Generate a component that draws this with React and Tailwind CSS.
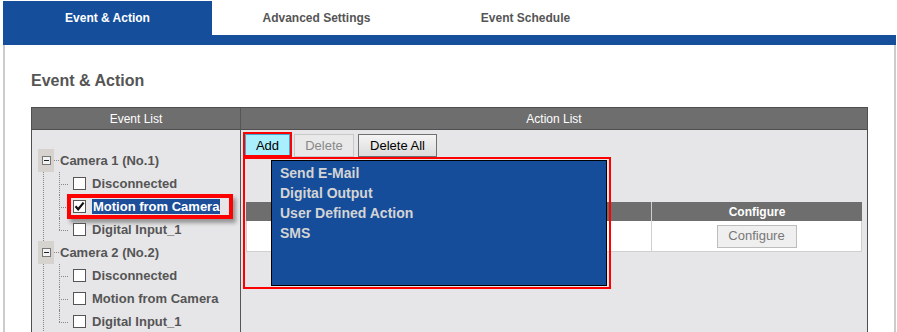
import React from "react";

const tabs = ["Event & Action", "Advanced Settings", "Event Schedule"];
const actions = ["Send E-Mail", "Digital Output", "User Defined Action", "SMS"];

const cameras = [
  { name: "Camera 1 (No.1)", items: ["Disconnected", "Motion from Camera", "Digital Input_1"], selected: 1 },
  { name: "Camera 2 (No.2)", items: ["Disconnected", "Motion from Camera", "Digital Input_1"], selected: -1 },
];

function Checkbox({ checked }) {
  return (
    <div className="w-[13px] h-[13px] border border-[#555] bg-white flex items-center justify-center shrink-0">
      {checked && (
        <svg width="11" height="11" viewBox="0 0 11 11">
          <path d="M1.5 5.2 L4.2 8.2 L9.6 1.6" fill="none" stroke="#111" strokeWidth="2.2" />
        </svg>
      )}
    </div>
  );
}

function CameraGroup({ cam }) {
  return (
    <div>
      <div className="flex items-center h-[23px]">
        <div className="w-[16px] h-[23px] bg-[#d6d3ce] flex items-center justify-center">
          <div className="w-[9px] h-[9px] border border-[#777] bg-[#f2f2f2] flex items-center justify-center">
            <div className="w-[5px] h-px bg-[#222]" />
          </div>
        </div>
        <div className="w-[5px] border-t border-dotted border-[#888]" />
        <span className="ml-px text-[13px] font-bold text-[#555]">{cam.name}</span>
      </div>
      {/* vertical line of the tree */}
      <div className="ml-[5px] border-l border-dotted border-[#888] pl-[15px]">
        {cam.items.map((item, i) => {
          const last = i === cam.items.length - 1;
          const sel = i === cam.selected;
          return (
            <div key={i} className="relative flex items-center h-[23px] pl-[14px]">
              <span className={`absolute left-0 top-0 border-l border-dotted border-[#888] ${last ? "h-1/2" : "h-full"}`} />
              <span className="absolute left-0 top-1/2 w-[9px] border-t border-dotted border-[#888]" />
              <Checkbox checked={sel} />
              {sel ? (
                <span className="ml-[6px] text-[13px] font-bold text-white bg-[#1c4e9a] leading-[15px] px-px">{item}</span>
              ) : (
                <span className="ml-[6px] text-[13px] font-bold text-[#555]">{item}</span>
              )}
              {sel && (
                <div className="absolute left-[8px] -top-px w-[166px] h-[25px] border-4 border-[#f00] shadow-[3px_4px_4px_rgba(0,0,0,0.35)]" />
              )}
            </div>
          );
        })}
      </div>
    </div>
  );
}

export default function App() {
  return (
    <div className="w-[897px] h-[332px] overflow-hidden bg-white font-['Liberation_Sans',Arial,sans-serif]">
      {/* Tabs */}
      <div className="pt-px pl-[3px] flex">
        {tabs.map((t, i) => (
          <div
            key={t}
            className={`w-[209px] h-[34px] flex items-center justify-center text-[12px] font-bold ${
              i === 0 ? "bg-[#154f9c] text-white" : "text-[#555]"
            }`}
          >
            {t}
          </div>
        ))}
      </div>
      <div className="ml-[3px] mr-px h-[10px] bg-[#154f9c]" />

      {/* Panel */}
      <div className="ml-[3px] mr-px h-[287px] border-l-2 border-r-2 border-[#cccccc]">
        <h1 className="pt-[26px] pl-[26px] text-[16px] leading-[20px] font-bold text-[#555]">Event & Action</h1>

        <div className="mt-[16px] ml-[26px] w-[837px] border-l border-r border-t border-[#4f4f4f] flex">
          {/* Event list */}
          <div className="w-[209px] border-r border-[#555]">
            <div className="h-[22px] bg-[#6e6e6e] border-b border-[#4f4f4f] flex items-center justify-center text-[12px] text-white">
              Event List
            </div>
            <div className="h-[220px] bg-[#e6e6e8] pt-[19px] pl-[6px]">
              {cameras.map((c) => (
                <CameraGroup key={c.name} cam={c} />
              ))}
            </div>
          </div>

          {/* Action list */}
          <div className="flex-1">
            <div className="h-[22px] bg-[#6e6e6e] border-b border-[#4f4f4f] flex items-center justify-center text-[12px] text-white">
              Action List
            </div>
            <div className="relative h-[220px] bg-[#e6e6e8] pt-[4px] pl-[4px]">
              <div className="flex gap-[4px]">
                <button className="w-[45px] h-[23px] bg-[#aaeffd] border border-[#3fa9d6] text-[13px] text-black">Add</button>
                <button className="w-[60px] h-[23px] bg-[#e9e9e9] border border-[#c8c8c8] text-[13px] text-[#888]">Delete</button>
                <button className="w-[79px] h-[23px] bg-gradient-to-b from-[#f4f4f4] to-[#dcdcdc] border border-[#707070] text-[13px] text-black">
                  Delete All
                </button>
              </div>

              <div className="mt-[45px] ml-px w-[616px]">
                <div className="flex h-[19px] bg-[#6e6e6e]">
                  <div className="w-[406px] border-r border-[#cfcfcf]" />
                  <div className="flex-1 flex items-center justify-center text-[12px] font-bold text-white">Configure</div>
                </div>
                <div className="flex h-[31px] bg-white border-l border-r border-b border-[#d0d0d0]">
                  <div className="w-[405px] border-r border-[#d0d0d0]" />
                  <div className="flex-1 flex items-center justify-center">
                    <button className="w-[80px] h-[23px] bg-[#efefef] border border-[#bdbdbd] text-[13px] text-[#777]">Configure</button>
                  </div>
                </div>
              </div>

              {/* Add menu */}
              <div className="absolute left-[30px] top-[30px] w-[336px] h-[126px] bg-[#164d9a] border border-black pt-[2px] pl-[8px]">
                {actions.map((a) => (
                  <div key={a} className="h-[20px] leading-[20px] text-[14px] font-bold text-[#d4d4d4]">
                    {a}
                  </div>
                ))}
              </div>

              {/* red annotations */}
              <div className="absolute left-[2px] top-[2px] w-[49px] h-[25px] border-2 border-[#f00]" />
              <div className="absolute left-[2px] top-[27px] w-[368px] h-[132px] border-2 border-[#f00]" />
            </div>
          </div>
        </div>
      </div>
    </div>
  );
}
